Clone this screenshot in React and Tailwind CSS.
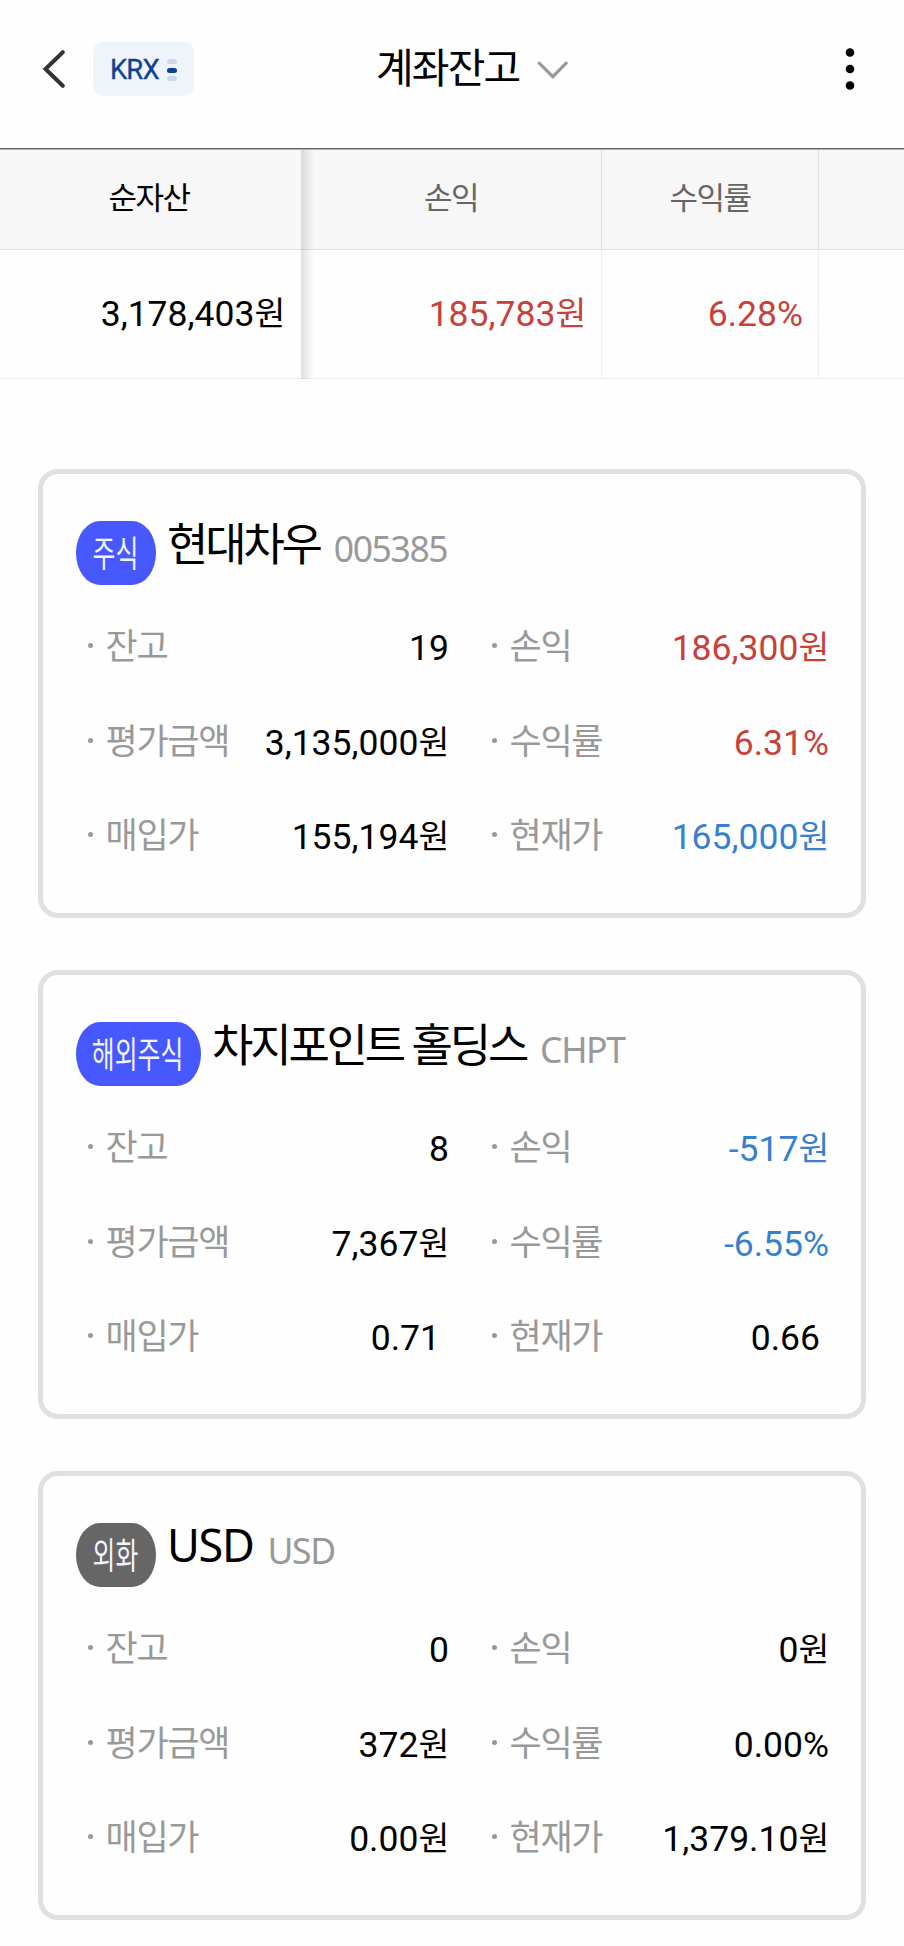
// ============================================================
//  AccountBalance — account summary table + holding cards
// ============================================================

const SUMMARY = [
  { label: '순자산', value: '3,178,403', unit: '원' },
  { label: '손익', value: '185,783', unit: '원', tone: 'up' },
  { label: '수익률', value: '6.28%', tone: 'up' },
];

const SUMMARY_WIDTHS = ['w-[301px]', 'w-[301px] border-r', 'w-[217px] border-r'];

const HOLDINGS = [
  {
    badge: '주식',
    badgeClass: 'w-20 bg-[#4758ff]',
    name: '현대차우',
    code: '005385',
    rows: [
      [{ label: '잔고', value: '19' }, { label: '손익', value: '186,300', unit: '원', tone: 'up' }],
      [{ label: '평가금액', value: '3,135,000', unit: '원' }, { label: '수익률', value: '6.31%', tone: 'up' }],
      [{ label: '매입가', value: '155,194', unit: '원' }, { label: '현재가', value: '165,000', unit: '원', tone: 'down' }],
    ],
  },
  {
    badge: '해외주식',
    badgeClass: 'w-[125px] bg-[#4758ff]',
    name: '차지포인트 홀딩스',
    code: 'CHPT',
    rows: [
      [{ label: '잔고', value: '8' }, { label: '손익', value: '-517', unit: '원', tone: 'down' }],
      [{ label: '평가금액', value: '7,367', unit: '원' }, { label: '수익률', value: '-6.55%', tone: 'down' }],
      [{ label: '매입가', value: '0.71', inset: true }, { label: '현재가', value: '0.66', inset: true }],
    ],
  },
  {
    badge: '외화',
    badgeClass: 'w-20 bg-[#666666]',
    name: 'USD',
    nameClass: '-mt-px tracking-[-1.3px]',
    code: 'USD',
    rows: [
      [{ label: '잔고', value: '0' }, { label: '손익', value: '0', unit: '원' }],
      [{ label: '평가금액', value: '372', unit: '원' }, { label: '수익률', value: '0.00%' }],
      [{ label: '매입가', value: '0.00', unit: '원' }, { label: '현재가', value: '1,379.10', unit: '원' }],
    ],
  },
];

const TONES = {
  up: 'text-[#c8403a]',
  down: 'text-[#3680d0]',
};

function Amount({ value, unit, tone }) {
  return (
    <span className={`whitespace-nowrap font-['Roboto','Noto_Sans_CJK_KR',sans-serif] text-[35.5px] ${unit ? '' : '-mr-px'} ${TONES[tone] || 'text-black'}`}>
      {value}
      {unit && (
        <span className="align-[1px] font-['Noto_Sans_CJK_KR',sans-serif] text-[33.5px] leading-none tracking-[-1.2px]">{unit}</span>
      )}
    </span>
  );
}

function Header() {
  return (
    <header className="flex h-[148px] items-start pt-[42px]">
      <svg className="ml-10 mt-[7px] h-10 w-7" viewBox="0 0 28 40" fill="none" stroke="#333" strokeWidth="4" strokeLinecap="round">
        <path d="M22.800 3.200 5.500 20l17.300 16.800" />
      </svg>
      <div className="ml-[25px] flex h-[54px] w-[101px] items-center rounded-[10px] bg-[#eff4fa] pl-[17px]">
        <span className="w-[50px] pt-px font-['Roboto',sans-serif] text-[27.5px] leading-[54px] tracking-[-0.9px] text-[#0f4392] [-webkit-text-stroke:0.3px_#0f4392]">
          KRX
        </span>
        <span className="ml-[7px] flex flex-col gap-[3.5px] pt-0.5">
          <i className="h-[5px] w-[10px] rounded-full bg-[#ccd8e9]" />
          <i className="h-[5px] w-[10px] rounded-full bg-[#0f4392]" />
          <i className="h-[5px] w-[10px] rounded-full bg-[#ccd8e9]" />
        </span>
      </div>
      <h1 className="-mt-0.5 ml-[182px] w-[146px] whitespace-nowrap font-['Noto_Sans_CJK_KR',sans-serif] text-[41px] leading-[50px] tracking-[-1.9px] text-black">
        계좌잔고
      </h1>
      <svg className="ml-[14px] mt-[17px] h-6 w-8" viewBox="0 0 32 24" fill="none" stroke="#999" strokeWidth="3.2" strokeLinecap="round">
        <path d="m3.200 4.200 13.600 13.500L30.200 4.200" />
      </svg>
      <svg className="ml-auto mr-11 mt-[3px] h-12 w-5" viewBox="0 0 20 48" fill="#000">
        <circle cx="10" cy="7.500" r="4.300" />
        <circle cx="10" cy="24" r="4.300" />
        <circle cx="10" cy="40.500" r="4.300" />
      </svg>
    </header>
  );
}

function Summary() {
  return (
    <section className="relative border-t border-[#666]">
      <div className="flex h-[101px] border-b border-t border-b-[#e0e0e0] border-t-[#b0b0b0] bg-[#f7f7f7]">
        {SUMMARY.map((col, i) => (
          <div
            key={col.label}
            className={`${SUMMARY_WIDTHS[i]} border-[#e0e0e0] text-center font-['Noto_Sans_CJK_KR',sans-serif] text-[31px] leading-[91px] tracking-[-1.6px] ${i === 0 ? 'pr-[3px] text-black' : 'text-[#666]'}`}
          >
            {col.label}
          </div>
        ))}
      </div>
      <div className="flex h-[129px] border-b border-[#eee] leading-[128px]">
        {SUMMARY.map((col, i) => (
          <div key={col.label} className={`${SUMMARY_WIDTHS[i]} border-[#eee] text-right ${i === 0 ? 'pr-[17px]' : 'pr-4'}`}>
            <Amount {...col} />
          </div>
        ))}
      </div>
      {/* Shadow of the pinned first column */}
      <div className="absolute bottom-0 left-[301px] top-px w-[13px] bg-linear-to-r from-black/12 to-transparent" />
    </section>
  );
}

function Field({ label, value, unit, tone, inset }) {
  return (
    <div className="flex">
      <i className="mt-[43px] size-[5px] shrink-0 rounded-full bg-[#999]" />
      <span className="ml-[12.5px] whitespace-nowrap font-['Noto_Sans_CJK_KR',sans-serif] text-[35px] leading-[88px] tracking-[-1.3px] text-[#999]">
        {label}
      </span>
      <span className={`ml-auto leading-[96px] ${inset ? 'pr-[9px]' : ''}`}>
        <Amount value={value} unit={unit} tone={tone} />
      </span>
    </div>
  );
}

function HoldingCard({ badge, badgeClass, name, nameClass = 'tracking-[-3.2px]', code, rows }) {
  return (
    <article className="h-[449px] rounded-[20px] border-[5px] border-[#e0e0e0] px-[33px] pt-[47px]">
      <div className="flex h-[79px] items-start">
        <div className={`flex h-16 shrink-0 justify-center rounded-[24px/32px] ${badgeClass}`}>
          <span className="flex scale-x-[0.69] justify-center whitespace-nowrap pr-0.5 font-['Noto_Sans_CJK_KR',sans-serif] text-[36px] leading-[60px] text-[#f4f4ff]">
            {badge}
          </span>
        </div>
        <h2 className={`ml-[11px] whitespace-nowrap font-['Noto_Sans','Noto_Sans_CJK_KR',sans-serif] text-[45px] leading-[45px] text-black ${nameClass}`}>
          {name}
        </h2>
        <span className="ml-[14px] mt-[3px] font-['Noto_Sans',sans-serif] text-[35.5px] leading-[49px] tracking-[-1.4px] text-[#999]">
          {code}
        </span>
      </div>
      <div className="pl-3">
        {rows.map(([left, right], i) => (
          <div key={i} className="grid h-[94.700px] grid-cols-[360px_336px] justify-between">
            <Field {...left} />
            <Field {...right} />
          </div>
        ))}
      </div>
    </article>
  );
}

export default function App() {
  return (
    <div className="min-h-[1946px] w-[904px] overflow-hidden bg-[#fefefe]">
      <Header />
      <Summary />
      <main className="mt-[90px] flex flex-col gap-[52px] px-[38px]">
        {HOLDINGS.map((item) => (
          <HoldingCard key={item.name} {...item} />
        ))}
      </main>
    </div>
  );
}
